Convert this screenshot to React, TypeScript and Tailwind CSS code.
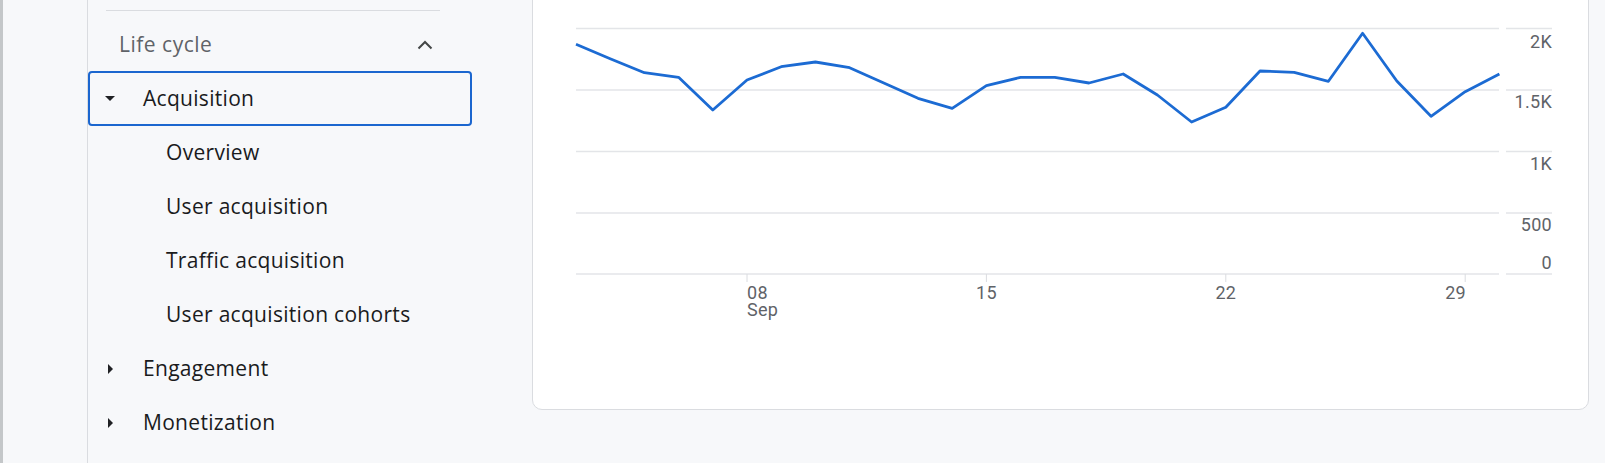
import React from "react";

// daily values, Sep 3 → Sep 30, already in page pixel y
const points: [number, number][] = [
    [576, 44.3], [610.2, 58.7], [644.4, 72.7], [678.6, 77.3], [712.8, 110],
    [747, 80], [781.2, 66.7], [815.4, 62], [849.6, 67.7], [883.8, 83],
    [918, 98.3], [952.2, 108.3], [986.4, 85.7], [1020.6, 77.3], [1054.8, 77.3],
    [1089, 83], [1123.2, 74], [1157.4, 95], [1191.6, 122], [1225.8, 107.3],
    [1260, 71], [1294.2, 72.3], [1328.4, 81.3], [1362.6, 33.3], [1396.8, 81],
    [1431, 116.3], [1465.2, 91.7], [1499.4, 74],
];

const OX = 533;
const gridY = [28.5, 90, 151.5, 213, 274];
const yLabels = [
    { t: "2K", y: 47.7 },
    { t: "1.5K", y: 108.3 },
    { t: "1K", y: 170 },
    { t: "500", y: 231 },
    { t: "0", y: 269.3 },
];
const ticks = [747, 986.4, 1225.8, 1465.2];

function Chart() {
    const d = points.map(([x, y], i) => `${i ? "L" : "M"}${(x - OX).toFixed(1)} ${y}`).join(" ");
    return (
        <svg width={1055} height={330} className="block">
            {gridY.map((y) => (
                <g key={y}>
                    <line x1={576 - OX} x2={1499 - OX} y1={y} y2={y} stroke="#e3e5e8" strokeWidth={1.3} />
                    <line x1={1506 - OX} x2={1552 - OX} y1={y} y2={y} stroke="#e3e5e8" strokeWidth={1.3} />
                </g>
            ))}
            {ticks.map((x) => (
                <line key={x} x1={x - OX} x2={x - OX} y1={274} y2={282} stroke="#dadce0" strokeWidth={1} />
            ))}
            <g fill="#5f6368" fontSize={18} fontFamily="Roboto, sans-serif">
                {yLabels.map((l) => (
                    <text key={l.t} x={1552 - OX} y={l.y} textAnchor="end">
                        {l.t}
                    </text>
                ))}
                <text x={747 - OX} y={298.5}>08</text>
                <text x={747 - OX} y={316}>Sep</text>
                <text x={986.4 - OX} y={298.5} textAnchor="middle">15</text>
                <text x={1225.8 - OX} y={298.5} textAnchor="middle">22</text>
                <text x={1466 - OX} y={298.5} textAnchor="end">29</text>
            </g>
            <path d={d} fill="none" stroke="#1c6bd3" strokeWidth={2.8} strokeLinejoin="round" />
        </svg>
    );
}

function CaretDown() {
    return (
        <svg width={10} height={5} viewBox="0 0 10 5" className="shrink-0">
            <polygon points="0,0 10,0 5,5" fill="#202124" />
        </svg>
    );
}

function CaretRight() {
    return (
        <svg width={5} height={10} viewBox="0 0 5 10" className="shrink-0">
            <polygon points="0,0 5,5 0,10" fill="#202124" />
        </svg>
    );
}

const subItems = ["Overview", "User acquisition", "Traffic acquisition", "User acquisition cohorts"];

export default function App() {
    return (
        <div className="flex h-[463px] w-[1605px] overflow-hidden bg-[#f7f8fa] font-['Open_Sans',sans-serif] text-[21px] tracking-[0.3px] text-[#1a1b1d]">
            <div className="w-[3px] shrink-0 bg-[#c4c7c9]" />
            <div className="w-[84px] shrink-0" />

            <nav className="w-[385px] shrink-0 border-l border-[#dadce0] pt-[10px]">
                <div className="ml-[18px] h-px w-[334px] bg-[#dadce0]" />
                <div className="flex h-[60px] items-center pt-[8px] pl-[31px] pr-[39px]">
                    <div className="flex-1 tracking-[0.5px] text-[#5f6368]">Life cycle</div>
                    <svg width={16} height={10} viewBox="0 0 16 10">
                        <polyline points="1.5,8.5 8,2 14.5,8.5" fill="none" stroke="#444746" strokeWidth={2} />
                    </svg>
                </div>

                <div className="flex h-[55px] w-[384px] items-center rounded-[4px] border-2 border-[#1b66cf] pl-[15px]">
                    <CaretDown />
                    <div className="ml-[28px] font-medium">Acquisition</div>
                </div>

                {subItems.map((s) => (
                    <div key={s} className="flex h-[54px] items-center pl-[78px]">
                        {s}
                    </div>
                ))}

                {["Engagement", "Monetization"].map((s) => (
                    <div key={s} className="flex h-[54px] items-center pl-[20px]">
                        <CaretRight />
                        <div className="ml-[30px] font-medium">{s}</div>
                    </div>
                ))}
            </nav>

            <main className="ml-[60px]">
                <div className="-mt-[20px] h-[430px] w-[1057px] rounded-[10px] border border-[#dadce0] bg-white pt-[19px]">
                    <Chart />
                </div>
            </main>
        </div>
    );
}
